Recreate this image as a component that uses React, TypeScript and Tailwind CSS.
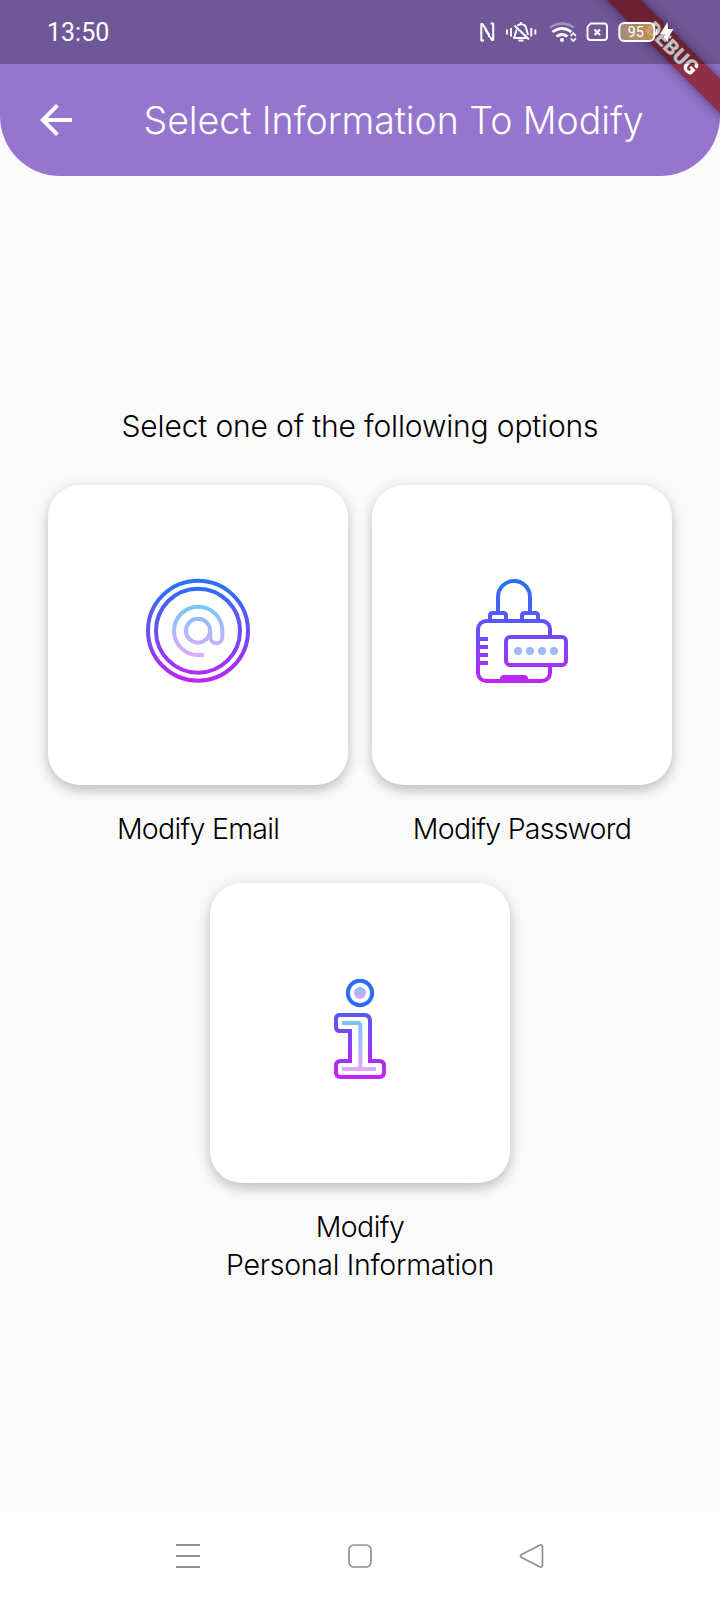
import type { ReactNode } from "react";

function Gradients() {
  return (
    <svg className="absolute size-0" aria-hidden="true">
      <defs>
        <linearGradient id="strong" gradientUnits="userSpaceOnUse" x1="0" y1="40" x2="0" y2="354">
          <stop offset="0" stopColor="#2176f5" />
          <stop offset="0.5" stopColor="#6a4ef5" />
          <stop offset="1" stopColor="#c024f2" />
        </linearGradient>
        <linearGradient id="soft" gradientUnits="userSpaceOnUse" x1="0" y1="118" x2="0" y2="278">
          <stop offset="0" stopColor="#72c8fa" />
          <stop offset="1" stopColor="#e3a8fa" />
        </linearGradient>
        <linearGradient id="dotFill" gradientUnits="userSpaceOnUse" x1="0" y1="66" x2="0" y2="102">
          <stop offset="0" stopColor="#7fc3fa" />
          <stop offset="1" stopColor="#e3a8fa" />
        </linearGradient>
        <linearGradient id="infoStrong" gradientUnits="userSpaceOnUse" x1="0" y1="143" x2="0" y2="342">
          <stop offset="0" stopColor="#5a58f0" />
          <stop offset="1" stopColor="#c424f2" />
        </linearGradient>
        <linearGradient id="infoSoft" gradientUnits="userSpaceOnUse" x1="0" y1="165" x2="0" y2="318">
          <stop offset="0" stopColor="#72c8fa" />
          <stop offset="1" stopColor="#e3a8fa" />
        </linearGradient>
      </defs>
    </svg>
  );
}

function EmailIcon() {
  return (
    <svg className="mt-[80px] ml-[87px] size-[130px]" viewBox="0 0 390 390" fill="none" strokeWidth="12">
      <circle cx="189" cy="197" r="150" stroke="url(#strong)" />
      <circle cx="189" cy="197" r="126" stroke="url(#strong)" />
      <g stroke="url(#soft)">
        <circle cx="189" cy="197" r="36" />
        <path d="M207 270h-18a72.500 72.500 0 1 1 73-73v20a18 18 0 0 1-36 0v-20" />
      </g>
    </svg>
  );
}

function PasswordIcon() {
  return (
    <svg className="mt-[80px] ml-[88px] size-[130px]" viewBox="0 0 390 390" fill="none" strokeWidth="12">
      <g stroke="url(#strong)">
        <path d="M114 142V96a48 48 0 0 1 96 0v46" />
        <path d="M90 168v-16q0-8 8-8h32q8 0 8 8v16M186 168v-16q0-8 8-8h32q8 0 8 8v16" />
        <path d="M270 210v-18a24 24 0 0 0-24-24H79a25 25 0 0 0-25 25v130a25 25 0 0 0 25 25h167a24 24 0 0 0 24-24v-24" />
        <rect x="138" y="216" width="180" height="84" rx="12" />
        <path d="M54 222h30M54 246h30M54 270h30M54 294h30" />
      </g>
      <path d="M120 352v-10q0-12 12-12h60q12 0 12 12v10z" fill="url(#strong)" />
      <g fill="#a0b8fc">
        <circle cx="174" cy="258" r="12.5" />
        <circle cx="210" cy="258" r="12.5" />
        <circle cx="246" cy="258" r="12.5" />
        <circle cx="282" cy="258" r="12.5" />
      </g>
    </svg>
  );
}

function InfoIcon() {
  return (
    <svg className="mt-[82px] ml-[100px] h-[130px] w-[100px]" viewBox="0 0 300 390" fill="none" strokeWidth="12">
      <circle cx="150" cy="84" r="36.500" stroke="#2f6df0" />
      <circle cx="150" cy="84" r="18" fill="url(#dotFill)" />
      <path
        stroke="url(#infoStrong)"
        d="M90 150h72q18 0 18 18v120h28q14 0 14 14v20q0 14-14 14H92q-14 0-14-14v-20q0-14 14-14h28v-90H90q-12 0-12-12v-24q0-12 12-12z"
      />
      <path stroke="url(#infoSoft)" d="M96 174h46q9 0 9 9v128M96 312h102" />
    </svg>
  );
}

function Option({ icon, children }: { icon: ReactNode; children: ReactNode }) {
  return (
    <div className="flex w-[300px] flex-col items-center">
      <div className="size-[300px] rounded-[32px] bg-white shadow-[0_6px_12px_rgba(0,0,0,0.16),0_2px_16px_rgba(0,0,0,0.1)]">
        {icon}
      </div>
      <div className="mt-[25px] text-center text-[28.5px] leading-[38px] font-[330] whitespace-nowrap">
        {children}
      </div>
    </div>
  );
}

function StatusIcons() {
  return (
    <svg className="h-16 w-[220px]" viewBox="470 0 220 64" fill="none" stroke="#fff" strokeWidth="2.2">
      <defs>
        <linearGradient id="battery">
          <stop offset="0" stopColor="#b5907a" />
          <stop offset="1" stopColor="#cda05c" />
        </linearGradient>
      </defs>
      <path d="M484 40.500h-2.700V24h1.200L489 34.500V37M485.500 27.500V30L492 40h1.200V23.500H490.500" strokeLinejoin="round" strokeWidth="2" />
      <path d="M516.800 29.500L514 38h12.500M517.500 25.500q1.500-1.200 3.500-1.200 5 0 5.500 5.200l1.500 5.500M521 22v2" strokeWidth="1.900" strokeLinejoin="round" />
      <path d="M518.500 40.500h5" strokeWidth="2" />
      <path d="M514.500 25.500l14.500 14" strokeWidth="1.900" />
      <path d="M507 29.500v5M511 28v8.500M531.300 28v8.500M535.300 29.500v5" strokeWidth="1.900" />
      <path d="M550 27.500q12-8 24 0" stroke="#a692c2" strokeWidth="2.500" />
      <path d="M552.500 32q9.500-7 19 0M556.500 36.500q5.500-4 11 0" strokeWidth="2.700" />
      <circle cx="562" cy="40" r="2.100" fill="#fff" stroke="none" />
      <path d="M570.700 36l2.600-2.800 2.600 2.800M570.700 38.300l2.600 2.800 2.600-2.800" strokeWidth="1.700" />
      <path d="M590.500 23.500H604q3 0 3 3V37q0 3-3 3h-13.500q-3 0-3-3V27z" strokeLinejoin="round" strokeWidth="1.900" />
      <path d="M594.500 29.500l5.500 5.500M600 29.500l-5.500 5.500" />
      <rect x="619.300" y="23" width="35" height="18" rx="5" fill="url(#battery)" fillOpacity="0.850" strokeWidth="2" />
      <path d="M656.500 29v6" strokeWidth="1.500" />
      <path d="M667.500 22l-7.500 12h5.500l-2 3 4.500 5 .500-5 5-8h-5.500z" fill="#fff" stroke="none" />
      <text x="635.800" y="36.800" textAnchor="middle" fontSize="14.300" fill="#fff" stroke="none" fontFamily="Roboto, sans-serif">
        95
      </text>
    </svg>
  );
}

export default function App() {
  return (
    <div className="relative flex h-[1600px] w-[720px] flex-col overflow-hidden bg-[#fafafa] font-['Inter',sans-serif] text-black">
      <Gradients />
      <header className="flex h-[176px] shrink-0 items-center rounded-b-[60px] bg-[#9575cd] pt-16 pl-[36px]">
        <svg className="size-10 shrink-0" viewBox="0 0 24 24" fill="#fff">
          <path d="M21.600 10.800H7l6.700-6.700L12 2.400 2.400 12l9.600 9.600 1.700-1.700L7 13.200h14.600z" />
        </svg>
        <h1 className="mt-[2px] ml-[67.500px] text-[37.500px] leading-[50px] font-[350] tracking-[-0.050px] whitespace-nowrap text-white">
          Select Information To Modify
        </h1>
      </header>

      <div className="absolute top-[36px] left-[572px] flex h-[24px] w-[200px] rotate-45 items-center justify-center bg-[rgba(142,19,19,0.720)] font-['Roboto',sans-serif] text-[20.400px] leading-none font-black text-white shadow-[0_0_12px_rgba(0,0,0,0.500)]">
        <span className="ml-[1px]">DEBUG</span>
      </div>

      <div className="absolute inset-x-0 top-0 flex h-16 items-center bg-black/25 pl-[47px]">
        <span className="mt-[2px] w-[423px] font-['Roboto',sans-serif] text-[25px] text-white">13:50</span>
        <StatusIcons />
      </div>

      <main className="flex grow flex-col items-center pt-[230px]">
        <p className="text-[30px] leading-[40px] font-[350] tracking-[-0.150px] whitespace-nowrap">
          Select one of the following options
        </p>
        <div className="mt-[39px] flex gap-6">
          <Option icon={<EmailIcon />}>
            <span className="tracking-[-0.720px]">Modify Email</span>
          </Option>
          <Option icon={<PasswordIcon />}>
            <span className="tracking-[-0.750px]">Modify Password</span>
          </Option>
        </div>
        <div className="mt-[35px]">
          <Option icon={<InfoIcon />}>
            <span className="tracking-[-0.600px]">Modify</span>
            <br />
            <span className="tracking-[-0.270px]">Personal Information</span>
          </Option>
        </div>
      </main>

      <nav className="flex h-[88px] shrink-0 items-center justify-between bg-white px-[174px]">
        <svg className="size-[28px]" viewBox="0 0 28 28" stroke="#909090" strokeWidth="2">
          <path d="M2 3h24M2 14h24M2 25h24" />
        </svg>
        <svg className="size-[28px]" viewBox="0 0 28 28" fill="none" stroke="#909090" strokeWidth="1.700">
          <rect x="3" y="3" width="22" height="22" rx="5" />
        </svg>
        <svg className="size-[28px]" viewBox="0 0 28 28" fill="none" stroke="#909090" strokeWidth="1.700" strokeLinejoin="round">
          <path d="M3.500 12.600L21.500 3.200q3-1.200 3 2v17.600q0 3.200-3 2L3.500 15.400q-2-1.400 0-2.800z" />
        </svg>
      </nav>
    </div>
  );
}
